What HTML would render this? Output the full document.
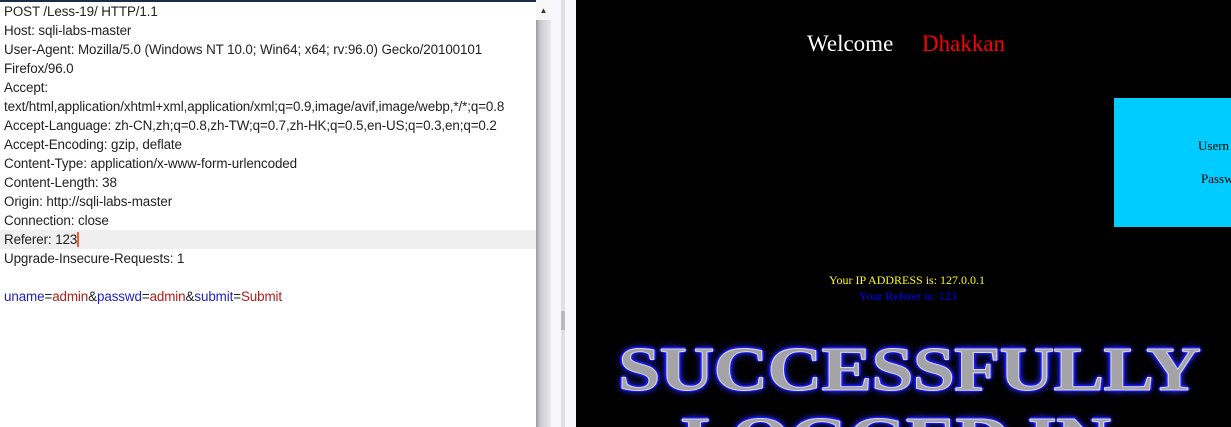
<!DOCTYPE html>
<html style="overflow:hidden;width:1231px;height:427px"><head><style>
*{margin:0;padding:0}
body{width:1231px;height:427px;overflow:hidden;position:relative;background:#fff;font-family:"Liberation Sans",sans-serif}
#left{position:absolute;left:0;top:0;width:536px;height:427px;background:#fff;border-top:2px solid #1c2b48;box-sizing:border-box}
.l{position:absolute;left:4px;font-size:13.4px;color:#222;height:19px;line-height:19px;white-space:nowrap;letter-spacing:-0.1px}
.hl{position:absolute;left:0;width:536px;height:19px;background:#efefef}
.b{color:#1f1fc0}.r{color:#b01c1c}
#sb{position:absolute;left:536px;top:0;width:15px;height:427px;background:linear-gradient(90deg,#9a9ca2,#c9cbd0 30%,#dcdde0 70%,#e8e9ec)}
#sbt{position:absolute;left:536px;top:0;width:15px;height:20px;background:#f7f7f8;font-size:8px;color:#333;text-align:center;line-height:22px}
#div{position:absolute;left:551px;top:0;width:25px;height:427px;background:#f8f8fa}
#div i{position:absolute;left:10px;top:0;width:4px;height:427px;background:#e0e1e8}
#right{position:absolute;left:576px;top:0;width:655px;height:427px;background:#000;font-family:"Liberation Serif",serif;overflow:hidden}
.s{position:absolute;white-space:nowrap}
.big{font-family:"Liberation Serif",serif;font-weight:900;color:#a4a4a8;font-size:70px;line-height:80px;letter-spacing:-1px;text-shadow:2px 0 0 #1818ff,-2px 0 0 #1818ff,0 2px 0 #1818ff,0 -2px 0 #1818ff,0 0 6px #2020ff,0 0 9px #3030ff;transform:scaleX(1.09) scaleY(0.9);transform-origin:left top;-webkit-text-stroke:1px #ddd}
#clip{position:absolute;left:0;top:404px;width:655px;height:23px;overflow:hidden}
</style></head><body>
<div id="left">
<div class="hl" style="top:228px"></div>
<div class="l" style="top:0px">POST /Less-19/ HTTP/1.1</div>
<div class="l" style="top:19px">Host: sqli-labs-master</div>
<div class="l" style="top:38px">User-Agent: Mozilla/5.0 (Windows NT 10.0; Win64; x64; rv:96.0) Gecko/20100101</div>
<div class="l" style="top:57px">Firefox/96.0</div>
<div class="l" style="top:76px">Accept:</div>
<div class="l" style="top:95px">text/html,application/xhtml+xml,application/xml;q=0.9,image/avif,image/webp,*/*;q=0.8</div>
<div class="l" style="top:114px">Accept-Language: zh-CN,zh;q=0.8,zh-TW;q=0.7,zh-HK;q=0.5,en-US;q=0.3,en;q=0.2</div>
<div class="l" style="top:133px">Accept-Encoding: gzip, deflate</div>
<div class="l" style="top:152px">Content-Type: application/x-www-form-urlencoded</div>
<div class="l" style="top:171px">Content-Length: 38</div>
<div class="l" style="top:190px">Origin: http://sqli-labs-master</div>
<div class="l" style="top:209px">Connection: close</div>
<div class="l" style="top:228px">Referer: 123<span style="display:inline-block;width:2px;height:15px;background:#f0602a;vertical-align:-3px"></span></div>
<div class="l" style="top:247px">Upgrade-Insecure-Requests: 1</div>
<div class="l" style="top:285px"><span class="b">uname</span>=<span class="r">admin</span>&amp;<span class="b">passwd</span>=<span class="r">admin</span>&amp;<span class="b">submit</span>=<span class="r">Submit</span></div>
</div>
<div id="sb"></div><div id="sbt">▲</div>
<div id="div"><i></i><b style="position:absolute;left:10px;top:311px;width:4px;height:19px;background:#b8bac2"></b></div>
<div id="right">
<div class="s" style="left:231px;top:31px;font-size:23px;color:#fff">Welcome</div>
<div class="s" style="left:346px;top:31px;font-size:23px;color:#f00">Dhakkan</div>
<div class="s" style="left:538px;top:98px;width:117px;height:129px;background:#00ccff"></div>
<div class="s" style="left:622px;top:138px;font-size:13px;color:#000">Usern</div>
<div class="s" style="left:625px;top:171px;font-size:13px;color:#000">Passw</div>
<div class="s" style="left:253px;top:273px;font-size:12px;color:#ff0">Your IP ADDRESS is: 127.0.0.1</div>
<div class="s" style="left:283px;top:289px;font-size:12px;color:#00f">Your Referer is: 123</div>
<div class="s big" style="left:42px;top:334px">SUCCESSFULLY</div>
<div id="clip"><div class="s big" style="left:105px;top:0px">LOGGED IN</div></div>
</div>
</body></html>
